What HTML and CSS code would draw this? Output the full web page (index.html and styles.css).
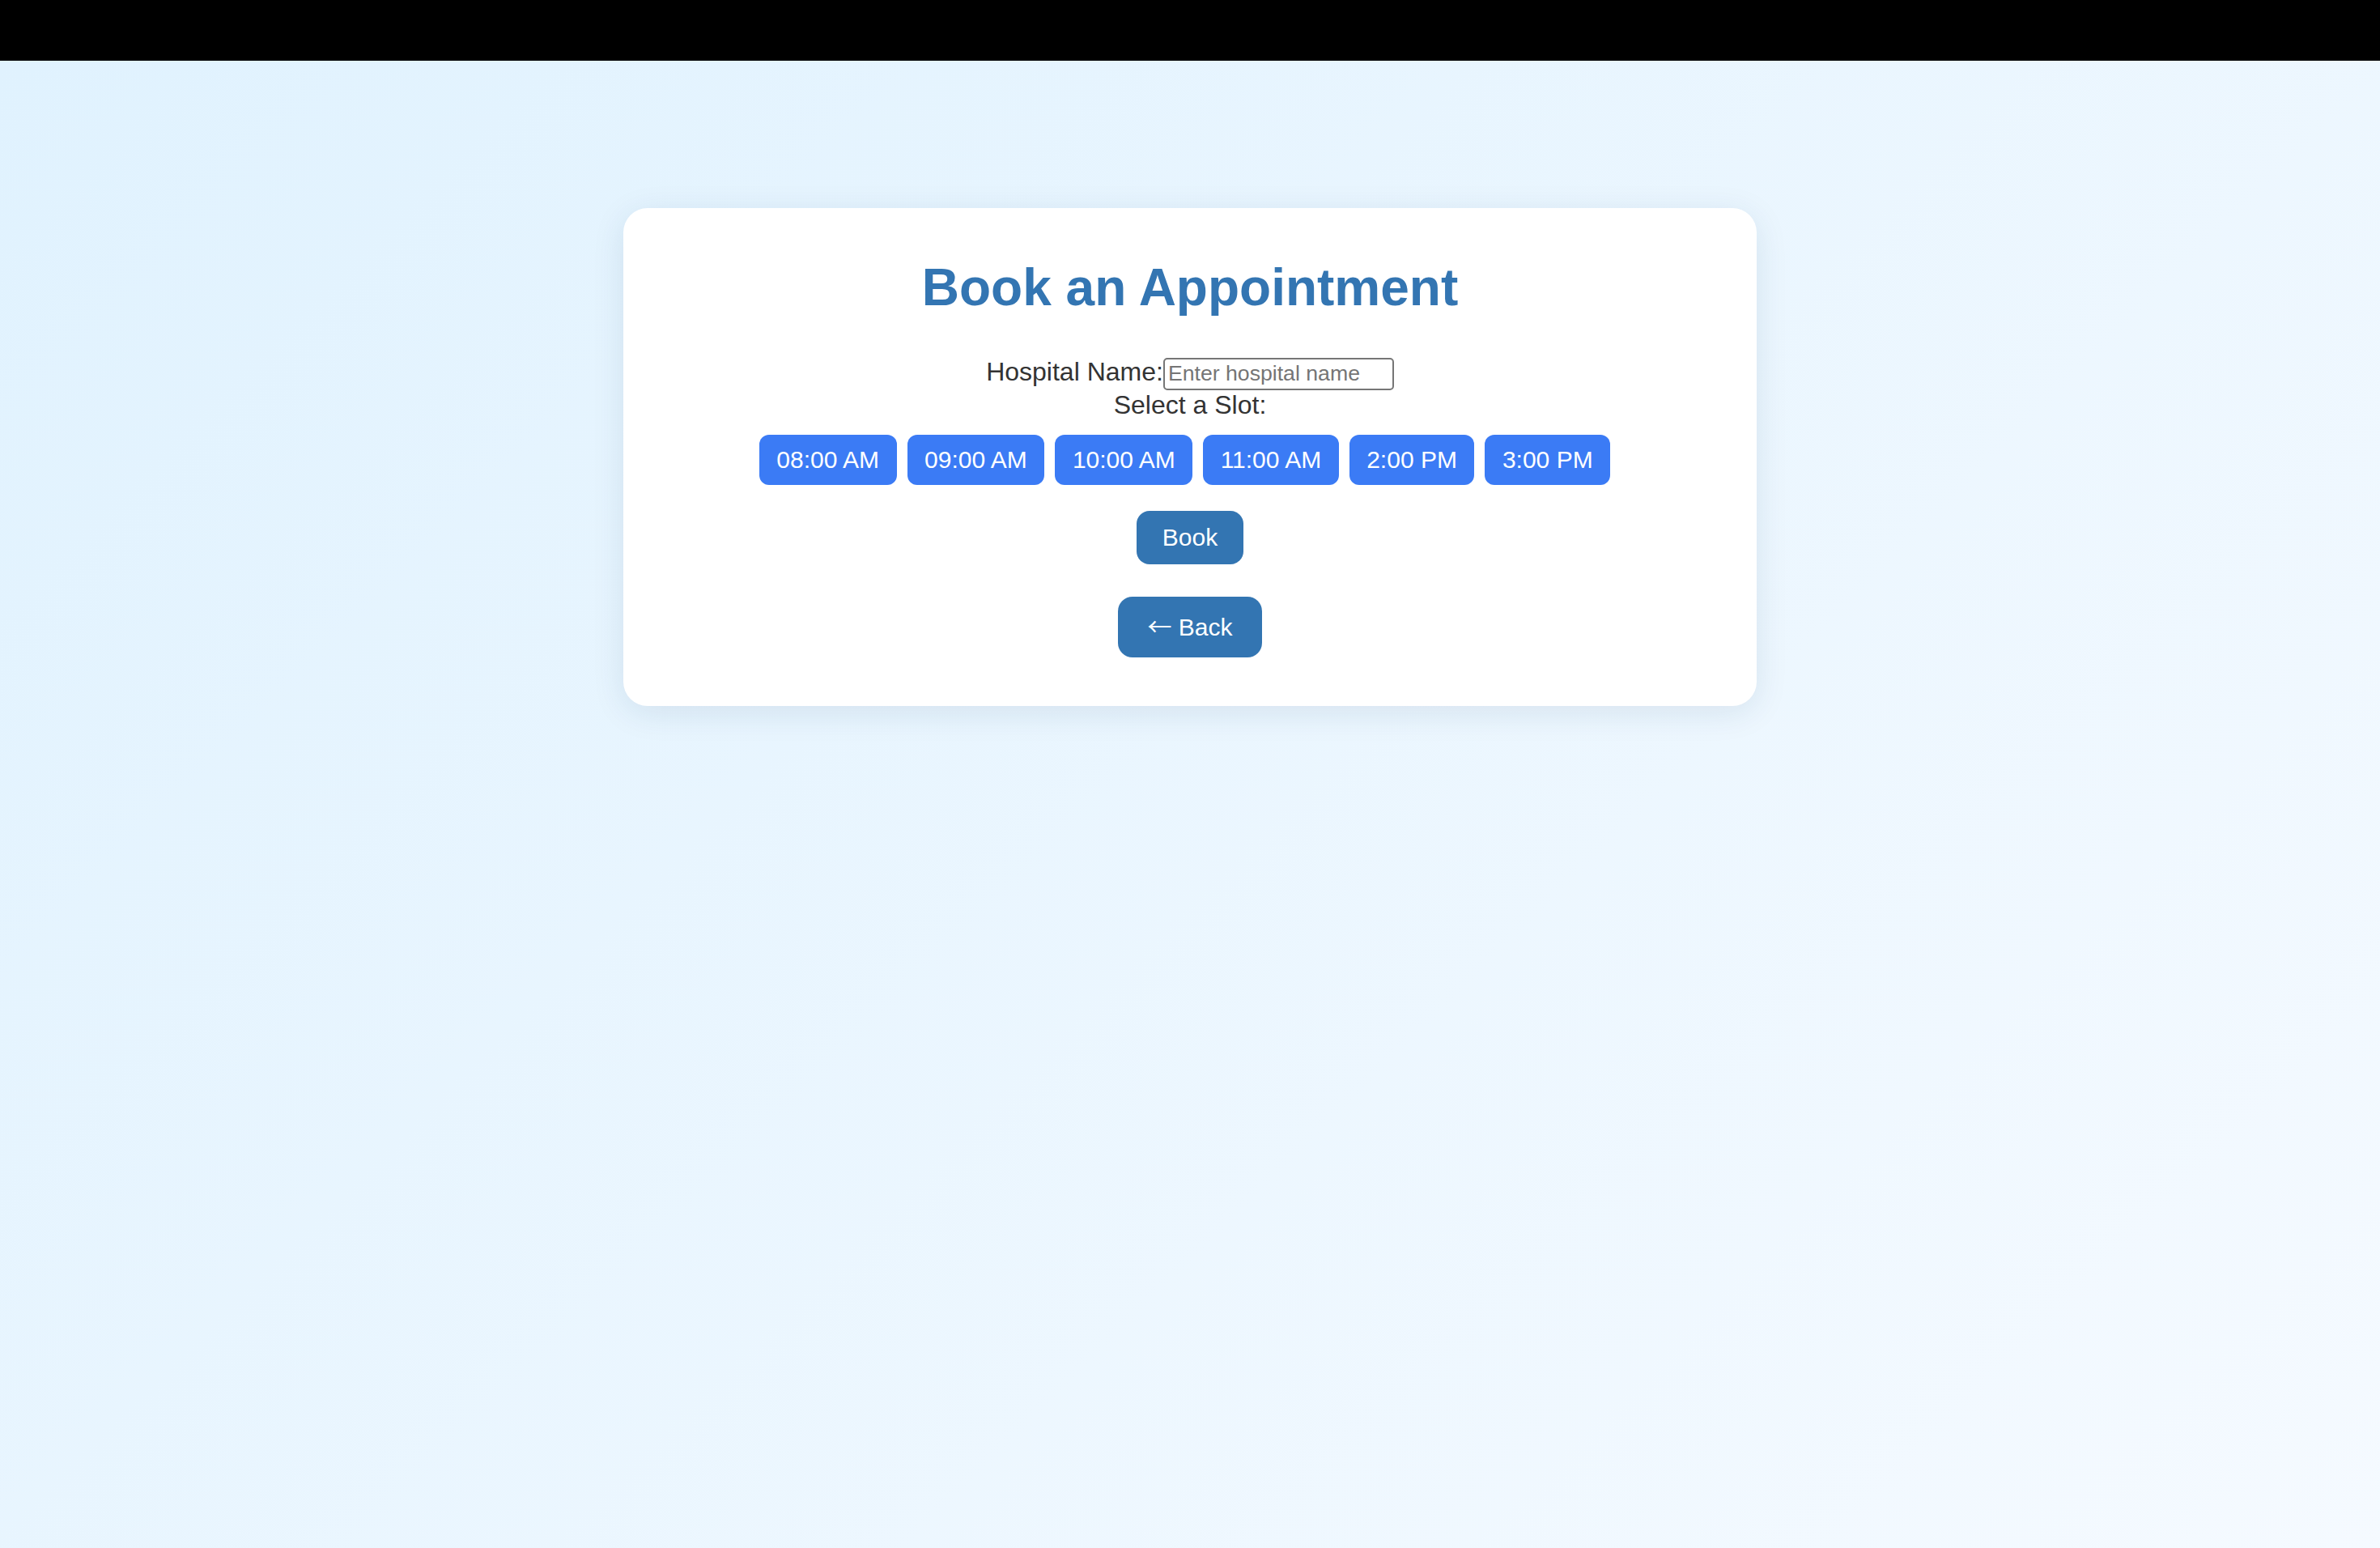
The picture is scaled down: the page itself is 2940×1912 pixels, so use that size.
FILE: index.html
```html
<!DOCTYPE html>
<html lang="en">
<head>
<meta charset="utf-8">
<title>Book an Appointment</title>
<link rel="stylesheet" href="styles.css">
</head>
<body>
<div class="topbar"></div>
<main class="page">
  <section class="card">
    <h1 class="title">Book an Appointment</h1>
    <div class="field-row">
      <label class="label" for="hospital">Hospital Name:</label><input class="text-input" id="hospital" type="text" placeholder="Enter hospital name">
    </div>
    <div class="slot-label-row"><span class="label">Select a Slot:</span></div>
    <div class="slots">
      <button class="slot">08:00 AM</button>
      <button class="slot">09:00 AM</button>
      <button class="slot">10:00 AM</button>
      <button class="slot">11:00 AM</button>
      <button class="slot">2:00 PM</button>
      <button class="slot">3:00 PM</button>
    </div>
    <div class="actions">
      <button class="btn btn-book">Book</button>
    </div>
    <div class="actions">
      <button class="btn btn-back"><span class="arrow">←</span> Back</button>
    </div>
  </section>
</main>
</body>
</html>
```
FILE: styles.css
```css
html, body {
  margin: 0;
  padding: 0;
}

body {
  font-family: "Liberation Sans", Arial, Helvetica, sans-serif;
  background: #000;
}

.topbar {
  height: 75px;
  background: #000;
}

.page {
  min-height: 1837px;
  background: linear-gradient(135deg, #e0f2fe 0%, #f5faff 100%);
  display: flex;
  flex-direction: column;
  align-items: center;
  padding-top: 182px;
  box-sizing: border-box;
}

.card {
  width: 1400px;
  box-sizing: border-box;
  background: #fff;
  border-radius: 30px;
  padding: 61px 40px 60px;
  box-shadow: 0 8px 40px rgba(20, 60, 100, 0.10);
  display: flex;
  flex-direction: column;
  align-items: center;
}

.title {
  margin: 0;
  font-size: 64px;
  line-height: 74px;
  font-weight: 700;
  color: #3375b2;
  text-align: center;
}

.field-row {
  margin-top: 49px;
  display: flex;
  justify-content: center;
  align-items: baseline;
}

.label {
  font-size: 32px;
  line-height: 37px;
  color: #333;
}

.text-input {
  box-sizing: border-box;
  width: 285px;
  height: 40px;
  margin: 0;
  padding: 0 4px;
  border: 2px solid #767676;
  border-radius: 5px;
  font-family: "Liberation Sans", Arial, Helvetica, sans-serif;
  font-size: 26.67px;
  color: #222;
  background: #fff;
}

.text-input::placeholder {
  color: #757575;
}

.slot-label-row {
  display: flex;
  justify-content: center;
}

.slots {
  margin-top: 18px;
  display: flex;
  justify-content: center;
}

.slot {
  margin: 0 13px 0 0;
  padding: 14px 21.5px;
  border: none;
  border-radius: 12px;
  background: #3b7bf5;
  color: #fff;
  font-family: "Liberation Sans", Arial, Helvetica, sans-serif;
  font-size: 30px;
  line-height: 34px;
  cursor: pointer;
}

.actions {
  display: flex;
  justify-content: center;
  margin-top: 32px;
}

.actions + .actions {
  margin-top: 40px;
}

.btn {
  border: none;
  background: #3375b2;
  color: #fff;
  font-family: "Liberation Sans", Arial, Helvetica, sans-serif;
  font-size: 30px;
  line-height: 34px;
  cursor: pointer;
}

.btn-book {
  padding: 16px 32px;
  border-radius: 16px;
}

.btn-back {
  padding: 20px 36px;
  border-radius: 18px;
}

.arrow {
  font-family: "Noto Sans CJK JP", "DejaVu Sans", sans-serif;
  line-height: 1;
}
```
